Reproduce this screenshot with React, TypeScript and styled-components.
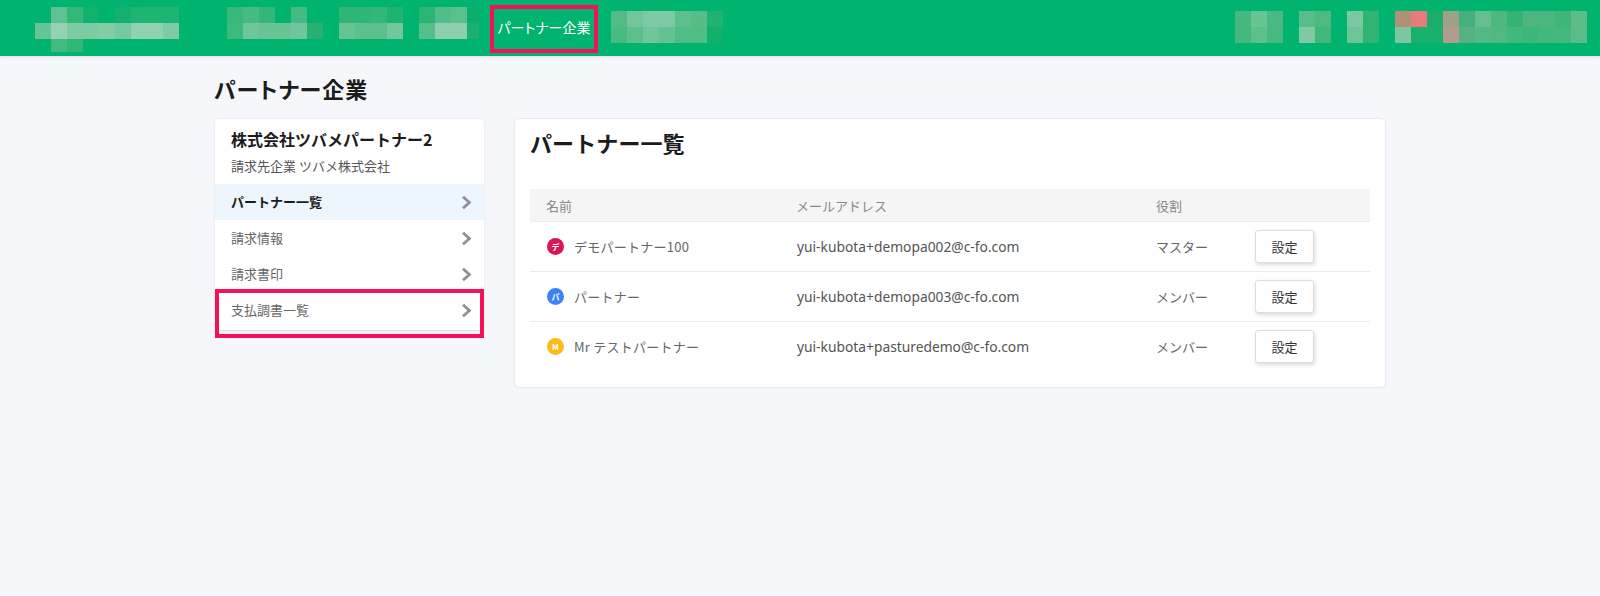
import styled, { createGlobalStyle } from "styled-components"

const GlobalStyle = createGlobalStyle`
    html, body {
        margin: 0;
        padding: 0;
        background: #f6f7fb;
    }
    body {
        font-family: "Noto Sans CJK JP", "Noto Sans", sans-serif;
        color: #333;
    }
`

const Page = styled.div`
    width: 1600px;
    height: 596px;
    overflow: hidden;
`

const Header = styled.header`
    display: flex;
    align-items: flex-start;
    height: 56px;
    padding-left: 35px;
    padding-right: 13px;
    background: #00b36f;
    box-shadow: 0 1px 2px rgba(60, 70, 120, 0.15);
`

// 모자이크 처리된 영역
const Mosaic = styled.div<{ $cols: number; $top: number; $left: number; $width?: number; $height?: number }>`
    display: grid;
    flex: none;
    grid-template-columns: repeat(${(p) => p.$cols}, 16px);
    grid-auto-rows: 16px;
    width: ${(p) => (p.$width ? `${p.$width}px` : "auto")};
    height: ${(p) => (p.$height ? `${p.$height}px` : "auto")};
    margin-top: ${(p) => p.$top}px;
    margin-left: ${(p) => p.$left}px;
    overflow: hidden;
`

const Cell = styled.span<{ $color: string }>`
    background: ${(p) => p.$color};
`

const NavItem = styled.a`
    position: relative;
    flex: none;
    display: flex;
    align-items: center;
    justify-content: center;
    width: 108px;
    height: 48px;
    box-sizing: border-box;
    padding-bottom: 5px;
    margin-top: 5px;
    margin-left: 11px;
    color: #fff;
    font-size: 14px;
    font-feature-settings: "palt";
    white-space: nowrap;
`

const Marker = styled.span`
    position: absolute;
    inset: 0;
    border: 4px solid #f5105a;
    pointer-events: none;
`

const HeaderRight = styled.div`
    display: flex;
    margin-left: auto;
`

const Main = styled.main`
    width: 1170px;
    margin-left: 215px;
    padding-top: 18px;
`

const PageTitle = styled.h1`
    margin: 0 0 16px -1px;
    height: 29px;
    font-size: 22px;
    font-weight: 700;
    line-height: 29px;
    color: #1c1c1c;
    font-feature-settings: "palt";
    letter-spacing: 1px;
`

const Columns = styled.div`
    display: flex;
    align-items: flex-start;
    gap: 31px;
`

const SideCard = styled.aside`
    width: 269px;
    height: 212px;
    box-sizing: border-box;
    background: #fff;
    border-radius: 4px;
    border-bottom: 1px solid #e2e2e2;
    box-shadow: 0 0 2px rgba(0, 0, 0, 0.12);
`

const CardHead = styled.div`
    height: 65px;
    padding-left: 16px;
    box-sizing: border-box;
`

const CompanyName = styled.div`
    padding-top: 8px;
    height: 32px;
    box-sizing: content-box;
    font-size: 16px;
    font-weight: 700;
    line-height: 24px;
    color: #1c1c1c;
`

const BillingName = styled.div`
    font-size: 13px;
    line-height: 20px;
    margin-top: -3px;
    color: #555;
`

const MenuRow = styled.a<{ $active?: boolean }>`
    position: relative;
    display: flex;
    align-items: center;
    justify-content: space-between;
    height: 36px;
    box-sizing: border-box;
    padding: 0 12px 2px 16px;
    background: ${(p) => (p.$active ? "#eef6fd" : "transparent")};
    color: ${(p) => (p.$active ? "#1c1c1c" : "#666")};
    font-size: 13px;
    font-weight: ${(p) => (p.$active ? 700 : 400)};
`

const ChevronIcon = styled.svg`
    flex: none;
    margin-top: 3px;
`

const MenuMarker = styled.span`
    position: absolute;
    left: 0;
    right: 0;
    top: -3px;
    height: 49px;
    border: 4px solid #f5105a;
    box-sizing: border-box;
    pointer-events: none;
`

const ListCard = styled.section`
    width: 870px;
    height: 268px;
    box-sizing: border-box;
    padding: 0 15px;
    background: #fff;
    border-radius: 4px;
    box-shadow: 0 0 2px rgba(0, 0, 0, 0.2);
`

const CardTitle = styled.h2`
    margin: 0;
    height: 62px;
    padding-top: 8px;
    box-sizing: content-box;
    font-size: 22px;
    font-weight: 700;
    line-height: 30px;
    color: #1c1c1c;
    letter-spacing: 0.1px;
`

const TableHead = styled.div`
    display: grid;
    grid-template-columns: 250px 360px 99px 1fr;
    align-items: center;
    height: 33px;
    padding-left: 16px;
    background: #f5f5f5;
    border-bottom: 1px solid #ececec;
    box-sizing: border-box;
    font-size: 13px;
    color: #888;
`

const TableRow = styled.div<{ $last?: boolean }>`
    display: grid;
    grid-template-columns: 250px 360px 99px 1fr;
    align-items: center;
    height: 50px;
    padding-left: 16px;
    padding-bottom: 1px;
    box-sizing: border-box;
    border-bottom: ${(p) => (p.$last ? "none" : "1px solid #ececec")};
    font-size: 13px;
    color: #666;
`

const NameCell = styled.div`
    display: flex;
    align-items: center;
    gap: 10px;
    padding-left: 1px;
    letter-spacing: 0.25px;
`

const Avatar = styled.span<{ $color: string }>`
    display: flex;
    align-items: center;
    justify-content: center;
    width: 17px;
    height: 17px;
    border-radius: 50%;
    background: ${(p) => p.$color};
    color: #fff;
    font-size: 8px;
    font-weight: 700;
    letter-spacing: 0;
`

const Email = styled.div`
    font-family: "Noto Sans", sans-serif;
    font-size: 13.8px;
    color: #555;
    padding-left: 1px;
`

const SettingButton = styled.button`
    width: 59px;
    height: 33px;
    padding: 0;
    background: #fff;
    border: 1px solid #ddd;
    border-radius: 3px;
    box-shadow: 1px 2px 4px rgba(0, 0, 0, 0.15);
    font-family: inherit;
    font-size: 13px;
    color: #333;
`

const _ = "transparent"

const logo = [
    [_, "#5fc293", "#33b87a", "#10b26d", _, "#14b06d", "#1eb472", "#1eb472", "#1eb472"],
    ["#65c596", "#93d2b2", "#7dcba2", "#7dcba2", "#82cca6", "#76c89d", "#90d2b0", "#90d2b0", "#7ecca4"],
    [_, "#41bb80", "#2eb777", _, _, _, _, _, _],
]
const nav1 = [
    ["#38b87b", "#45bb83", "#33b679", _, "#45bb83", _],
    ["#3cba7e", "#6fc69a", "#68c495", "#68c495", "#6fc69a", "#28b072"],
]
const nav2 = [
    ["#2fb677", "#2db676", "#33b779", "#20b370"],
    ["#65c394", "#5cc08e", "#5cc08e", "#73c79c"],
]
const nav3 = [
    ["#2bb575", "#51bd88", "#5bc08e", "#0cb06c"],
    ["#55bf8b", "#8ccfac", "#8ccfac", "#1bb06e"],
]
const nav4 = [
    ["#52bc86", "#72c69a", "#7dc9a3", "#7dc9a3", "#5cbf8c", "#56bd89", "#1fb270"],
    ["#48bb82", "#5cc08d", "#70c69a", "#63c292", "#50bd87", "#50bd87", "#12b06d"],
]
const right1 = [
    ["#45b880", "#68c493", "#4ab983"],
    ["#45b880", "#5cc08c", "#49b982"],
]
const right2 = [
    ["#58bd8a", "#4dba82"],
    ["#80c9a3", "#3eb87b"],
]
const right3 = [
    ["#7cc9a1", "#2fb473"],
    ["#6cc596", "#2fb473"],
]
const right4 = [
    ["#b19176", "#e87a7d", "#1cad6c", "#a0a088", "#45b07b", "#67be8e", "#4fb780", "#34b474", "#4db57f", "#4db57f", "#3fb578", "#5cbd8b"],
    ["#7cc79f", "#17b16d", "#17b16d", "#b59a8e", "#57b283", "#54ba85", "#50b983", "#40b97a", "#3ab877", "#43b87c", "#45b87d", "#5abc8a"],
]

function Blur({ rows, top, left, width, height }: { rows: string[][]; top: number; left: number; width?: number; height?: number }) {
    return (
        <Mosaic $cols={rows[0].length} $top={top} $left={left} $width={width} $height={height}>
            {rows.flat().map((c, i) => (
                <Cell key={i} $color={c} />
            ))}
        </Mosaic>
    )
}

function Chevron() {
    return (
        <ChevronIcon width="11" height="15" viewBox="0 0 11 15" fill="none">
            <polyline points="2,1.8 8.4,7.5 2,13.2" stroke="#909090" strokeWidth="2.8" />
        </ChevronIcon>
    )
}

const menu = ["パートナー一覧", "請求情報", "請求書印", "支払調書一覧"]

const members = [
    { name: "デモパートナー100", mark: "デ", color: "#dd1558", email: "yui-kubota+demopa002@c-fo.com", role: "マスター" },
    { name: "パートナー", mark: "パ", color: "#3b82f6", email: "yui-kubota+demopa003@c-fo.com", role: "メンバー" },
    { name: "Mr テストパートナー", mark: "M", color: "#fbbc1a", email: "yui-kubota+pasturedemo@c-fo.com", role: "メンバー" },
]

export default function App() {
    return (
        <Page>
            <GlobalStyle />
            <Header>
                <Blur rows={logo} top={7} left={0} height={45} />
                <Blur rows={nav1} top={7} left={48} />
                <Blur rows={nav2} top={7} left={16} />
                <Blur rows={nav3} top={7} left={16} width={60} />
                <NavItem>
                    パートナー企業
                    <Marker />
                </NavItem>
                <Blur rows={nav4} top={11} left={13} />
                <HeaderRight>
                    <Blur rows={right1} top={11} left={0} />
                    <Blur rows={right2} top={11} left={16} />
                    <Blur rows={right3} top={11} left={16} />
                    <Blur rows={right4} top={11} left={16} />
                </HeaderRight>
            </Header>
            <Main>
                <PageTitle>パートナー企業</PageTitle>
                <Columns>
                    <SideCard>
                        <CardHead>
                            <CompanyName>株式会社ツバメパートナー2</CompanyName>
                            <BillingName>請求先企業 ツバメ株式会社</BillingName>
                        </CardHead>
                        {menu.map((label, i) => (
                            <MenuRow key={label} $active={i === 0}>
                                {label}
                                <Chevron />
                                {i === 3 && <MenuMarker />}
                            </MenuRow>
                        ))}
                    </SideCard>
                    <ListCard>
                        <CardTitle>パートナー一覧</CardTitle>
                        <TableHead>
                            <div>名前</div>
                            <div>メールアドレス</div>
                            <div>役割</div>
                        </TableHead>
                        {members.map((m, i) => (
                            <TableRow key={m.email} $last={i === members.length - 1}>
                                <NameCell>
                                    <Avatar $color={m.color}>{m.mark}</Avatar>
                                    {m.name}
                                </NameCell>
                                <Email>{m.email}</Email>
                                <div>{m.role}</div>
                                <div>
                                    <SettingButton>設定</SettingButton>
                                </div>
                            </TableRow>
                        ))}
                    </ListCard>
                </Columns>
            </Main>
        </Page>
    )
}
